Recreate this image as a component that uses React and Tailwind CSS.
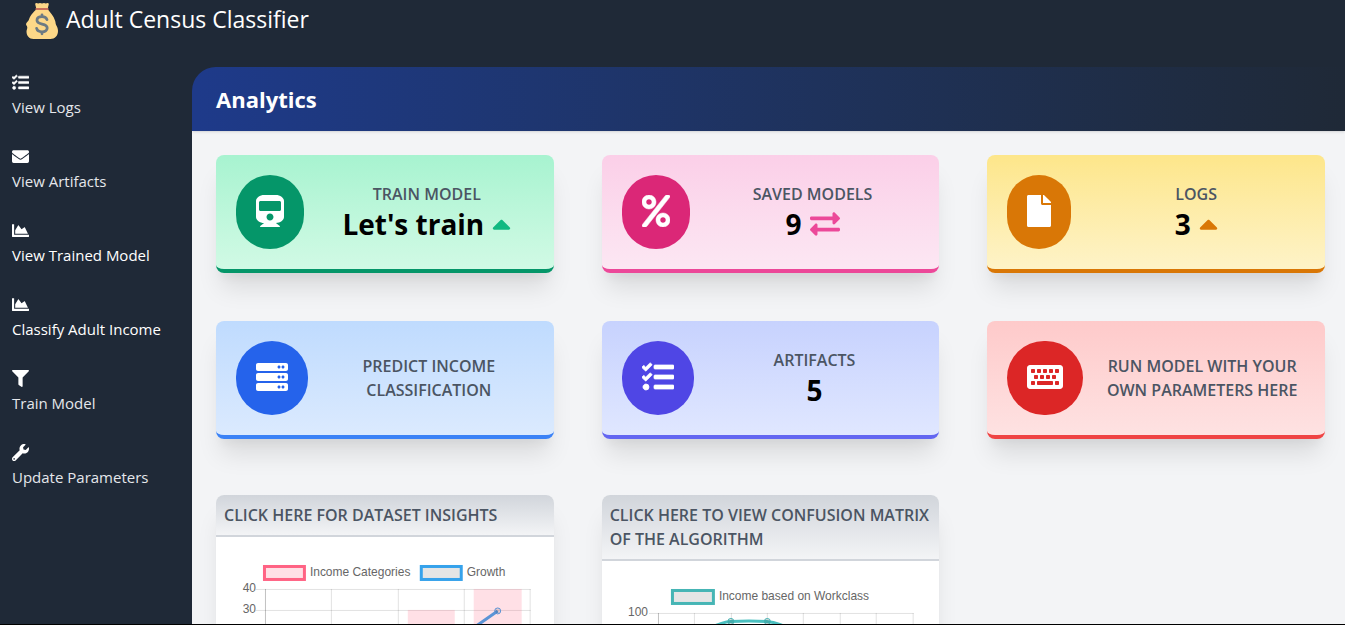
import {
  FaTasks,
  FaEnvelope,
  FaChartArea,
  FaFilter,
  FaWrench,
  FaTrain,
  FaPercent,
  FaFile,
  FaServer,
  FaKeyboard,
  FaCaretUp,
  FaExchangeAlt,
} from "react-icons/fa";

const NAV = [
  { label: "View Logs", icon: FaTasks, iconStroke: "stroke-[16]", tone: "text-[#e5e7eb]" },
  { label: "View Artifacts", icon: FaEnvelope, tone: "text-[#e5e7eb]" },
  { label: "View Trained Model", icon: FaChartArea, tone: "text-white" },
  { label: "Classify Adult Income", icon: FaChartArea, tone: "text-white" },
  { label: "Train Model", icon: FaFilter, tone: "text-[#e5e7eb]" },
  { label: "Update Parameters", icon: FaWrench, tone: "text-[#e5e7eb]" },
];

const CARDS = [
  {
    title: "Train Model",
    value: "Let's train",
    icon: FaTrain,
    iconSize: "w-7",
    card: "from-[#a7f3d0] to-[#d1fae5] border-[#059669]",
    disc: "bg-[#059669]",
    mark: FaCaretUp,
    markStyle: "w-[19px] text-[#10b981]",
  },
  {
    title: "Saved Models",
    value: "9",
    icon: FaPercent,
    iconSize: "w-7 stroke-[8]",
    card: "from-[#fbcfe8] to-[#fce7f3] border-[#ec4899]",
    disc: "bg-[#db2777]",
    mark: FaExchangeAlt,
    markStyle: "w-[30px] text-[#ec4899]",
  },
  {
    title: "Logs",
    value: "3",
    icon: FaFile,
    iconSize: "w-6",
    card: "from-[#fde68a] to-[#fef3c7] border-[#d97706]",
    disc: "bg-[#d97706]",
    mark: FaCaretUp,
    markStyle: "w-[19px] text-[#d97706]",
  },
  {
    title: "Predict Income Classification",
    icon: FaServer,
    iconSize: "w-8",
    card: "from-[#bfdbfe] to-[#dbeafe] border-[#3b82f6]",
    disc: "bg-[#2563eb]",
  },
  {
    title: "Artifacts",
    value: "5",
    icon: FaTasks,
    iconSize: "w-8 stroke-[12]",
    card: "from-[#c7d2fe] to-[#e0e7ff] border-[#6366f1]",
    disc: "bg-[#4f46e5]",
  },
  {
    title: "Run model with your own parameters here",
    icon: FaKeyboard,
    iconSize: "w-9",
    card: "from-[#fecaca] to-[#fee2e2] border-[#ef4444]",
    disc: "bg-[#dc2626]",
  },
];

function MoneyBag() {
  return (
    <svg viewBox="0 0 32 36" className="h-9 w-8 shrink-0" aria-hidden="true">
      <path
        d="M9.2 1.2Q9.2 0 10.4 0l1.8.6L14 0l2 .6L18 0l1.8.6L21.6 0q1.2 0 1.2 1.2L21.6 6H10.4Z"
        fill="#fdd888"
      />
      <path
        d="M10.4 6h11.2c2.6 3.4 6.3 7.2 7.6 12 .5 1.8.3 3 1.3 4.8C31.6 24.7 32 26.2 32 28c0 4.8-3.2 8-7.5 8h-17C3.2 36 .5 32.8.5 28.5c0-1.6.8-2.5.8-4C1.3 23-.3 22.5.1 20.8.5 19 2.4 18.7 3 16.5 4.2 12 7.9 9.2 10.4 6Z"
        fill="#fdd888"
      />
      <rect x="9.4" y="5" width="13.2" height="2" rx="1" fill="#c9705a" />
      <path
        d="M21 16.6c-.6-1.9-2.5-3-5-3-2.9 0-5 1.4-5 3.7 0 5.4 10.2 2.3 10.2 7.7 0 2.3-2.2 3.8-5.2 3.8-2.8 0-4.9-1.3-5.4-3.5M16 12v1.6M16 28.8v2"
        fill="none"
        stroke="#6c7a83"
        strokeWidth="2.8"
        strokeLinecap="round"
      />
    </svg>
  );
}

function StatCard({ title, value, icon: Icon, iconSize, card, disc, mark: Mark, markStyle }) {
  return (
    <a
      href="#"
      className={`flex items-center gap-4 rounded-lg border-b-4 bg-linear-to-b p-5 shadow-[0_20px_25px_-5px_rgba(0,0,0,0.1),0_10px_10px_-5px_rgba(0,0,0,0.04)] ${card}`}
    >
      <span className={`shrink-0 rounded-full px-5 pt-5 pb-[22px] text-white ${disc}`}>
        <Icon className={`h-8 ${iconSize}`} />
      </span>
      <span className="flex-1 text-center">
        <span className="block text-base leading-6 font-semibold text-[#4b5563] uppercase">
          {title}
        </span>
        {value && (
          <span className="flex items-center justify-center gap-2 text-[28px] leading-9 font-bold text-black">
            {value}
            {Mark && <Mark className={`h-[30px] ${markStyle}`} />}
          </span>
        )}
      </span>
    </a>
  );
}

function Panel({ title, children }) {
  return (
    <section className="rounded-lg bg-white shadow-[0_20px_25px_-5px_rgba(0,0,0,0.1),0_10px_10px_-5px_rgba(0,0,0,0.04)]">
      <h2 className="rounded-t-lg border-b-2 border-[#d1d5db] bg-linear-to-b from-[#d1d5db] to-[#f3f4f6] p-2 text-base leading-6 font-semibold text-[#4b5563] uppercase">
        <a href="#">{title}</a>
      </h2>
      <div className="p-5">{children}</div>
    </section>
  );
}

const CHART = "block w-full font-['Liberation_Sans',Arial,sans-serif] text-[12px]";

function InsightsChart() {
  const columns = [95.5, 162.5, 228.5, 294.5];
  const rows = [
    [32.5, "40"],
    [53.5, "30"],
    [74.5, "20"],
    [95.5, "10"],
    [116.5, "0"],
  ];
  return (
    <svg viewBox="0 0 298 149" className={CHART} role="img" aria-label="Income categories and growth">
      <g stroke="#000" strokeOpacity="0.12">
        {rows.map(([y]) => (
          <line key={y} x1="20" x2="295" y1={y} y2={y} />
        ))}
        {columns.map((x) => (
          <line key={x} x1={x} x2={x} y1="32" y2="126" />
        ))}
        <line x1="29.5" x2="29.5" y1="32" y2="126" strokeOpacity="0.25" />
      </g>
      <g fill="#ff6384" fillOpacity="0.2">
        <rect x="172" y="53" width="47" height="64" />
        <rect x="238" y="32" width="48" height="85" />
      </g>
      <polyline points="62,106 129,111 195,101 262,54" fill="none" stroke="#5b94d6" strokeWidth="3" />
      <circle cx="262" cy="54" r="3" fill="#000" fillOpacity="0.1" stroke="#5b94d6" />
      <rect x="28.5" y="9.5" width="40" height="13" fill="#ffe0e6" stroke="#ff6384" strokeWidth="3" />
      <rect x="185.5" y="9.5" width="40" height="13" fill="#e5e5e5" stroke="#36a2eb" strokeWidth="3" />
      <g fill="#666">
        <text x="74" y="19">Income Categories</text>
        <text x="231" y="19">Growth</text>
        {rows.map(([y, label]) => (
          <text key={label} x="20" y={y + 3} textAnchor="end">
            {label}
          </text>
        ))}
      </g>
    </svg>
  );
}

function WorkclassChart() {
  const columns = [72.5, 109.5, 145.5, 181.5, 218.5, 254.5, 291.5];
  const rows = [
    [32.5, "100"],
    [74.5, "50"],
    [116.5, "0"],
  ];
  return (
    <svg viewBox="0 0 298 149" className={CHART} role="img" aria-label="Income based on workclass">
      <g stroke="#000" strokeOpacity="0.12">
        {rows.map(([y]) => (
          <line key={y} x1="27" x2="292" y1={y} y2={y} />
        ))}
        {columns.map((x) => (
          <line key={x} x1={x} x2={x} y1="32" y2="126" />
        ))}
        <line x1="36.5" x2="36.5" y1="32" y2="126" strokeOpacity="0.25" />
      </g>
      <path
        d="M36.5 62C50 60 60 58 72.5 54 88 49 95 41 109 40.5c12-.5 24-.5 36 0C158 41 168 49 182 56c14 7 24 6 36.5 4l36-8 37-6"
        fill="none"
        stroke="#4bc0c0"
        strokeWidth="3"
      />
      <g fill="#000" fillOpacity="0.1" stroke="#3fb0b0">
        <circle cx="109" cy="40.5" r="3" />
        <circle cx="145.5" cy="40.5" r="3" />
      </g>
      <rect x="50.5" y="9.5" width="41" height="13" fill="#e5e5e5" stroke="#46b5b5" strokeWidth="3" />
      <g fill="#666">
        <text x="97" y="19">Income based on Workclass</text>
        {rows.map(([y, label]) => (
          <text key={label} x="26" y={y + 3} textAnchor="end">
            {label}
          </text>
        ))}
      </g>
    </svg>
  );
}

export default function App() {
  return (
    <div className="flex h-screen flex-col overflow-hidden border-b border-black bg-[#1f2937] font-['Open_Sans','Noto_Sans',sans-serif]">
      <header className="flex h-[67px] shrink-0 items-start px-[26px] pt-[3px] text-white">
        <a href="#" className="flex items-start gap-2">
          <MoneyBag />
          <span className="text-[23px] leading-8">Adult Census Classifier</span>
        </a>
      </header>

      <div className="flex min-h-0 flex-1">
        <nav className="w-48 shrink-0 px-3 pt-1">
          <ul className="flex flex-col gap-[26px]">
            {NAV.map(({ label, icon: Icon, iconStroke = "", tone }) => (
              <li key={label}>
                <a href="#" className="block">
                  <span className="flex h-6 items-start pt-[3px] text-white">
                    <Icon className={`size-[17px] ${iconStroke}`} />
                  </span>
                  <span className={`block text-[15px] leading-6 font-medium whitespace-nowrap ${tone}`}>
                    {label}
                  </span>
                </a>
              </li>
            ))}
          </ul>
        </nav>

        <main className="min-w-0 flex-1 overflow-y-auto rounded-tl-3xl bg-[#f3f4f6] [scrollbar-width:none]">
          <h1 className="bg-linear-to-r from-[#1e3a8a] to-[#1f2937] px-6 py-4 text-[22px] leading-8 font-bold text-white shadow-sm">
            Analytics
          </h1>
          <div className="flex flex-col gap-14 pt-6 pr-5 pb-12 pl-6">
            <div className="grid grid-cols-3 gap-12">
              {CARDS.map((card) => (
                <StatCard key={card.title} {...card} />
              ))}
            </div>
            <div className="grid grid-cols-3 items-start gap-12">
              <Panel title="Click here for dataset insights">
                <InsightsChart />
              </Panel>
              <Panel title="Click here to view confusion matrix of the algorithm">
                <WorkclassChart />
              </Panel>
            </div>
          </div>
        </main>
      </div>
    </div>
  );
}
